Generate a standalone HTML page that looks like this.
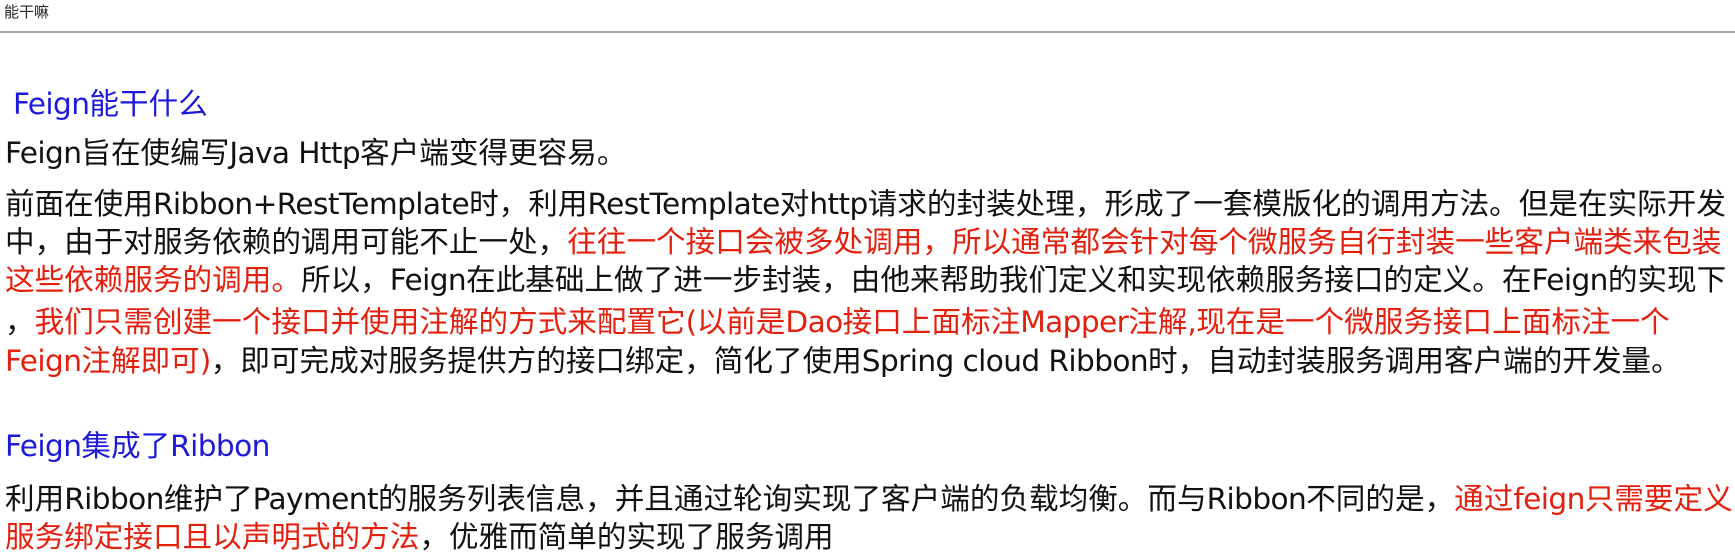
<!DOCTYPE html>
<html><head><meta charset="utf-8"><style>
body{margin:0;width:1735px;height:556px;background:#fff;overflow:hidden;position:relative;font-family:"DejaVu Sans","Noto Sans CJK SC",sans-serif;color:#111;}
.top{position:absolute;left:4px;top:4px;font-size:15px;line-height:18px;color:#222;font-family:"Liberation Sans","Noto Sans CJK SC",sans-serif}
.bar{position:absolute;left:0;top:31px;width:1735px;height:2px;background:#a8a8a8}
.l{position:absolute;left:5px;font-size:29.6px;line-height:40px;white-space:nowrap}
.b{color:#1c1ad8}.r{color:#e3200e}
i{font-style:normal;letter-spacing:-0.6px}
</style></head><body>
<div class="top">能干嘛</div><div class="bar"></div>
<div class="l b" style="top:84px;left:13px"><i>Feign</i>能干什么</div>
<div class="l" style="top:133px"><i>Feign</i>旨在使编写<i>Java Http</i>客户端变得更容易。</div>
<div class="l" style="top:184px">前面在使用<i>Ribbon+RestTemplate</i>时，利用<i>RestTemplate</i>对<i>http</i>请求的封装处理，形成了一套模版化的调用方法。但是在实际开发</div>
<div class="l" style="top:222px">中，由于对服务依赖的调用可能不止一处，<span class="r">往往一个接口会被多处调用，所以通常都会针对每个微服务自行封装一些客户端类来包装</span></div>
<div class="l" style="top:260px"><span class="r">这些依赖服务的调用。</span>所以，<i>Feign</i>在此基础上做了进一步封装，由他来帮助我们定义和实现依赖服务接口的定义。在<i>Feign</i>的实现下</div>
<div class="l" style="top:302px">，<span class="r">我们只需创建一个接口并使用注解的方式来配置它<i>(</i>以前是<i>Dao</i>接口上面标注<i>Mapper</i>注解<i>,</i>现在是一个微服务接口上面标注一个</span></div>
<div class="l" style="top:341px"><span class="r"><i>Feign</i>注解即可<i>)</i></span>，即可完成对服务提供方的接口绑定，简化了使用<i>Spring cloud Ribbon</i>时，自动封装服务调用客户端的开发量。</div>
<div class="l b" style="top:426px"><i>Feign</i>集成了<i>Ribbon</i></div>
<div class="l" style="top:479px">利用<i>Ribbon</i>维护了<i>Payment</i>的服务列表信息，并且通过轮询实现了客户端的负载均衡。而与<i>Ribbon</i>不同的是，<span class="r">通过<i>feign</i>只需要定义</span></div>
<div class="l" style="top:517px"><span class="r">服务绑定接口且以声明式的方法</span>，优雅而简单的实现了服务调用</div>
</body></html>
